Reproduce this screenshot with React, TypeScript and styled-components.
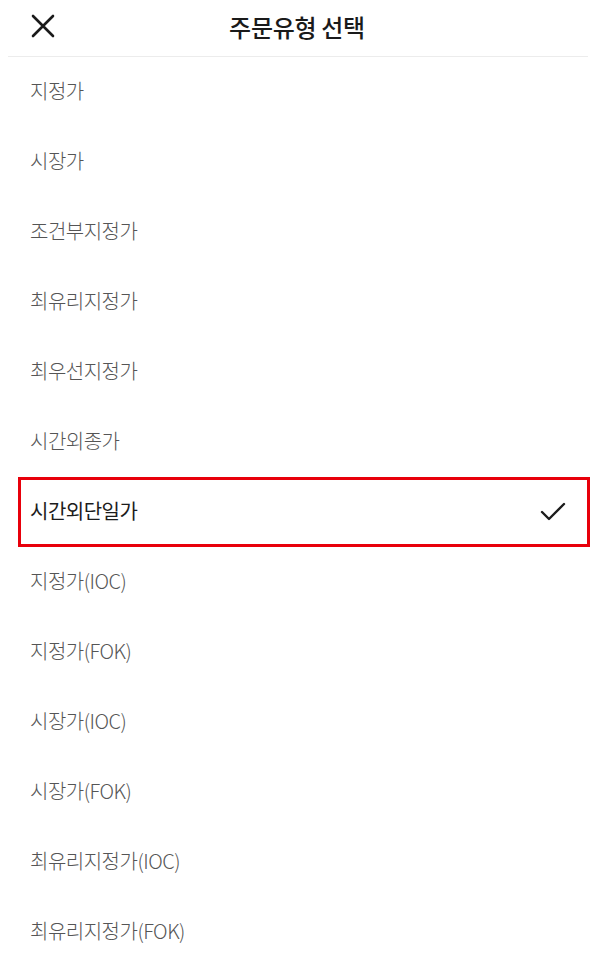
import { createGlobalStyle, styled } from "styled-components";

const GlobalStyle = createGlobalStyle`
	html, body {
		margin: 0;
		padding: 0;
		background: #fff;
	}
	body {
		font-family: "Noto Sans CJK KR", "Noto Sans", sans-serif;
	}
`;

const Page = styled.div`
	width: 608px;
	min-height: 970px;
	background: #fff;
	overflow: hidden;
`;

const Header = styled.header`
	position: relative;
	height: 56px;
	padding-right: 14px;
	display: flex;
	align-items: center;
	justify-content: center;
`;

const CloseButton = styled.button`
	position: absolute;
	left: 28px;
	top: 11px;
	width: 30px;
	height: 30px;
	padding: 0;
	border: none;
	background: none;
	display: flex;
	align-items: center;
	justify-content: center;
	cursor: pointer;
`;

const Title = styled.h1`
	margin: 0;
	margin-top: -4px;
	font-size: 24px;
	font-weight: 500;
	color: #1a1a1a;
	letter-spacing: -0.3px;
`;

const Divider = styled.div`
	height: 1px;
	margin: 0 20px 0 8px;
	background: #ececec;
`;

const List = styled.ul`
	list-style: none;
	margin: 0;
	padding: 0;
`;

const Row = styled.li<{ $selected: boolean }>`
	box-sizing: border-box;
	height: 70px;
	margin: 0 18px;
	padding: 0 20px 4px ${({ $selected }) => ($selected ? "9px" : "12px")};
	display: flex;
	align-items: center;
	justify-content: space-between;
	border: ${({ $selected }) => ($selected ? "3px solid #e8000b" : "none")};
	font-size: 20px;
	letter-spacing: -0.5px;
	font-weight: ${({ $selected }) => ($selected ? 400 : 300)};
	color: ${({ $selected }) => ($selected ? "#1c1c1c" : "#555")};

	svg {
		margin-top: 4px;
	}
`;

const options = [
	"지정가",
	"시장가",
	"조건부지정가",
	"최유리지정가",
	"최우선지정가",
	"시간외종가",
	"시간외단일가",
	"지정가(IOC)",
	"지정가(FOK)",
	"시장가(IOC)",
	"시장가(FOK)",
	"최유리지정가(IOC)",
	"최유리지정가(FOK)",
];

const selected = "시간외단일가";

const App = () => {
	return (
		<Page>
			<GlobalStyle />
			<Header>
				<CloseButton aria-label="닫기">
					<svg width="26" height="26" viewBox="0 0 26 26">
						<path
							d="M3 3 L23 23 M23 3 L3 23"
							stroke="#1a1a1a"
							strokeWidth="2.6"
							strokeLinecap="round"
						/>
					</svg>
				</CloseButton>
				<Title>주문유형 선택</Title>
			</Header>
			<Divider />
			<List>
				{options.map((label) => (
					<Row key={label} $selected={label === selected}>
						<span>{label}</span>
						{label === selected && (
							<svg width="28" height="24" viewBox="0 0 28 24">
								<polyline
									points="3,12 10,19 25,4"
									fill="none"
									stroke="#1c1c1c"
									strokeWidth="2.4"
									strokeLinecap="round"
									strokeLinejoin="round"
								/>
							</svg>
						)}
					</Row>
				))}
			</List>
		</Page>
	);
};

export default App;
